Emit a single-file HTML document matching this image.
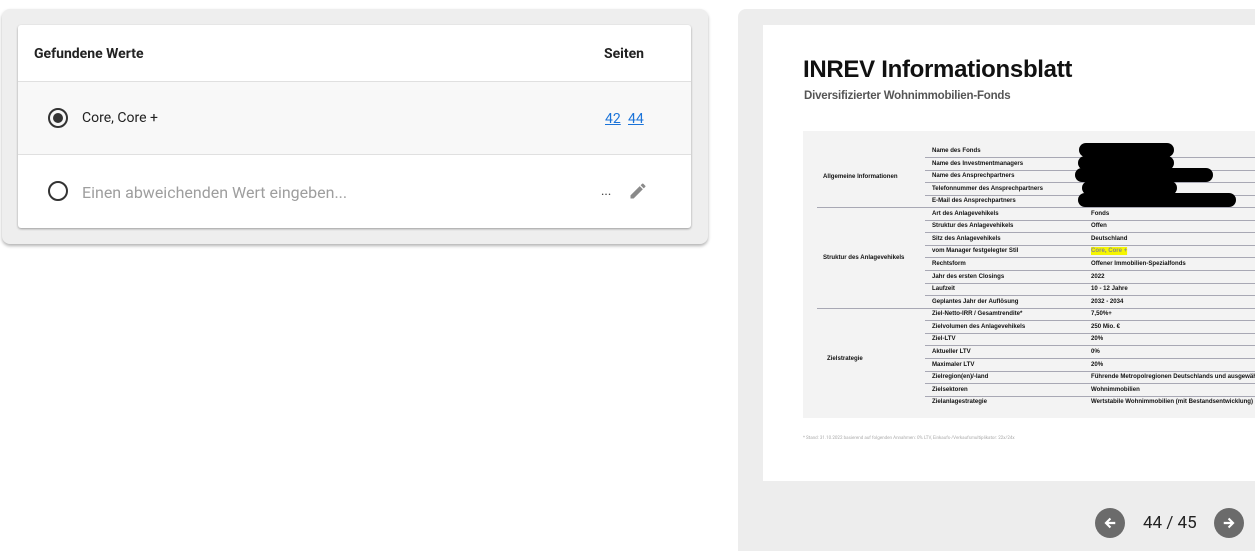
<!DOCTYPE html>
<html style="overflow:hidden;width:1255px;height:551px"><head><meta charset="utf-8"><style>
*{margin:0;padding:0;box-sizing:border-box}
body{width:1255px;height:551px;background:#fff;position:relative;overflow:hidden;font-family:"Roboto","Liberation Sans",sans-serif}
.abs{position:absolute}
.lp{left:2px;top:9px;width:706px;height:235px;background:#eeeeee;border-radius:8px;box-shadow:0 2px 3px rgba(0,0,0,.3)}
.card{left:18px;top:25px;width:673px;height:203px;background:#fff;border-radius:3px;box-shadow:0 1px 2px rgba(0,0,0,.35)}
.rp{left:738px;top:9px;width:517px;height:542px;background:#ededed;border-radius:8px 0 0 0}
.page{left:763px;top:25px;width:492px;height:456px;background:#fff}
.tbl{left:803px;top:131px;width:452px;height:287px;background:#f3f3f3}
.t{position:absolute;font-family:"Liberation Sans",sans-serif;font-size:6.4px;font-weight:bold;color:#111;white-space:nowrap;line-height:8px;transform:scaleX(.95);transform-origin:left}
.ln{position:absolute;left:925px;width:330px;height:1px;background:#a8a8b4}
.bk{position:absolute;background:#000;border-radius:7px;height:14px}
.btn{width:30px;height:30px;border-radius:50%;background:#6b6b6b}
</style></head><body>
<div class="abs lp"></div>
<div class="abs card"></div>
<div class="abs" style="left:34px;top:46px;font-size:14px;font-weight:bold;color:#222">Gefundene Werte</div>
<div class="abs" style="left:604px;top:46px;font-size:14px;font-weight:bold;color:#222">Seiten</div>
<div class="abs" style="left:18px;top:81px;width:673px;height:1px;background:#e0e0e0"></div>
<div class="abs" style="left:18px;top:82px;width:673px;height:72px;background:#f8f8f8"></div>
<div class="abs" style="left:18px;top:154px;width:673px;height:1px;background:#e0e0e0"></div>
<div class="abs" style="left:48px;top:108px;width:20px;height:20px;border:2px solid #333;border-radius:50%"></div>
<div class="abs" style="left:53px;top:113px;width:10px;height:10px;background:#333;border-radius:50%"></div>
<div class="abs" style="left:82px;top:110px;font-size:14px;color:#222">Core, Core +</div>
<div class="abs" style="left:605px;top:111px;font-size:14px;color:#1a73d9;text-decoration:underline">42</div>
<div class="abs" style="left:628px;top:111px;font-size:14px;color:#1a73d9;text-decoration:underline">44</div>
<div class="abs" style="left:48px;top:181px;width:20px;height:20px;border:2px solid #333;border-radius:50%"></div>
<div class="abs" style="left:82px;top:183px;font-size:16px;color:#9e9e9e">Einen abweichenden Wert eingeben...</div>
<div class="abs" style="left:601px;top:184px;font-size:13px;color:#333">...</div>
<svg class="abs" style="left:628px;top:181px" width="20" height="20" viewBox="0 0 24 24"><path fill="#8a8a8a" d="M3 17.25V21h3.75L17.81 9.94l-3.75-3.75L3 17.25zM20.71 7.04a1 1 0 0 0 0-1.41l-2.34-2.34a1 1 0 0 0-1.41 0l-1.83 1.83 3.75 3.75 1.83-1.83z"/></svg>

<div class="abs rp"></div>
<div class="abs page"></div>
<div class="abs" style="left:803px;top:56px;font-family:'Liberation Sans',sans-serif;font-size:24px;font-weight:bold;color:#111;letter-spacing:-0.3px">INREV Informationsblatt</div>
<div class="abs" style="left:804px;top:90px;font-family:'Liberation Sans',sans-serif;font-size:11.5px;font-weight:bold;color:#555;letter-spacing:-0.2px">Diversifizierter Wohnimmobilien-Fonds</div>
<div class="abs tbl"></div>

<div class="t" style="left:823px;top:173px">Allgemeine Informationen</div>
<div class="t" style="left:823px;top:254px">Struktur des Anlagevehikels</div>
<div class="t" style="left:827px;top:355px">Zielstrategie</div>
<div class="abs" style="left:817px;top:207px;width:438px;height:1px;background:#a8a8b4"></div>
<div class="abs" style="left:817px;top:308px;width:438px;height:1px;background:#a8a8b4"></div>

<div class="t" style="left:932px;top:147px">Name des Fonds</div><div class="ln" style="top:157px"></div>
<div class="t" style="left:932px;top:160px">Name des Investmentmanagers</div><div class="ln" style="top:170px"></div>
<div class="t" style="left:932px;top:172px">Name des Ansprechpartners</div><div class="ln" style="top:182px"></div>
<div class="t" style="left:932px;top:185px">Telefonnummer des Ansprechpartners</div><div class="ln" style="top:195px"></div>
<div class="t" style="left:932px;top:197px">E-Mail des Ansprechpartners</div>
<div class="t" style="left:932px;top:210px">Art des Anlagevehikels</div><div class="t" style="left:1091px;top:210px">Fonds</div><div class="ln" style="top:220px"></div>
<div class="t" style="left:932px;top:222px">Struktur des Anlagevehikels</div><div class="t" style="left:1091px;top:222px">Offen</div><div class="ln" style="top:232px"></div>
<div class="t" style="left:932px;top:235px">Sitz des Anlagevehikels</div><div class="t" style="left:1091px;top:235px">Deutschland</div><div class="ln" style="top:245px"></div>
<div class="t" style="left:932px;top:247px">vom Manager festgelegter Stil</div><div class="t" style="left:1091px;top:247px;background:#f5f500;color:#888">Core, Core +</div><div class="ln" style="top:257px"></div>
<div class="t" style="left:932px;top:260px">Rechtsform</div><div class="t" style="left:1091px;top:260px">Offener Immobilien-Spezialfonds</div><div class="ln" style="top:270px"></div>
<div class="t" style="left:932px;top:273px">Jahr des ersten Closings</div><div class="t" style="left:1091px;top:273px">2022</div><div class="ln" style="top:283px"></div>
<div class="t" style="left:932px;top:285px">Laufzeit</div><div class="t" style="left:1091px;top:285px">10 - 12 Jahre</div><div class="ln" style="top:295px"></div>
<div class="t" style="left:932px;top:298px">Geplantes Jahr der Auflösung</div><div class="t" style="left:1091px;top:298px">2032 - 2034</div>
<div class="t" style="left:932px;top:310px">Ziel-Netto-IRR / Gesamtrendite*</div><div class="t" style="left:1091px;top:310px">7,50%+</div><div class="ln" style="top:320px"></div>
<div class="t" style="left:932px;top:323px">Zielvolumen des Anlagevehikels</div><div class="t" style="left:1091px;top:323px">250 Mio. €</div><div class="ln" style="top:333px"></div>
<div class="t" style="left:932px;top:335px">Ziel-LTV</div><div class="t" style="left:1091px;top:335px">20%</div><div class="ln" style="top:345px"></div>
<div class="t" style="left:932px;top:348px">Aktueller LTV</div><div class="t" style="left:1091px;top:348px">0%</div><div class="ln" style="top:358px"></div>
<div class="t" style="left:932px;top:361px">Maximaler LTV</div><div class="t" style="left:1091px;top:361px">20%</div><div class="ln" style="top:371px"></div>
<div class="t" style="left:932px;top:373px">Zielregion(en)/-land</div><div class="t" style="left:1091px;top:373px">Führende Metropolregionen Deutschlands und ausgewählte</div><div class="ln" style="top:383px"></div>
<div class="t" style="left:932px;top:386px">Zielsektoren</div><div class="t" style="left:1091px;top:386px">Wohnimmobilien</div><div class="ln" style="top:396px"></div>
<div class="t" style="left:932px;top:398px">Zielanlagestrategie</div><div class="t" style="left:1091px;top:398px">Wertstabile Wohnimmobilien (mit Bestandsentwicklung)</div>

<div class="bk" style="left:1079px;top:143px;width:95px"></div>
<div class="bk" style="left:1078px;top:156px;width:96px"></div>
<div class="bk" style="left:1075px;top:168px;width:138px"></div>
<div class="bk" style="left:1082px;top:181px;width:95px"></div>
<div class="bk" style="left:1078px;top:193px;width:158px"></div>
<div class="abs" style="left:803px;top:436px;font-size:4.5px;color:#aaa;white-space:nowrap">* Stand: 31.10.2022 basierend auf folgenden Annahmen: 0% LTV, Einkaufs-/Verkaufsmultiplikator: 22x/24x</div>

<div class="abs btn" style="left:1095px;top:508px"></div>
<svg class="abs" style="left:1103px;top:516px" width="14" height="14" viewBox="0 0 24 24"><path fill="#fff" d="M21 10H9.5l4.5-4.5L11.5 3 2.5 12l9 9 2.5-2.5L9.5 14H21z"/></svg>
<div class="abs" style="left:1143px;top:513px;font-size:17px;color:#222">44 / 45</div>
<div class="abs btn" style="left:1214px;top:508px"></div>
<svg class="abs" style="left:1222px;top:516px" width="14" height="14" viewBox="0 0 24 24"><path fill="#fff" d="M3 10h11.5L10 5.5 12.5 3l9 9-9 9-2.5-2.5 4.5-4.5H3z"/></svg>
</body></html>
